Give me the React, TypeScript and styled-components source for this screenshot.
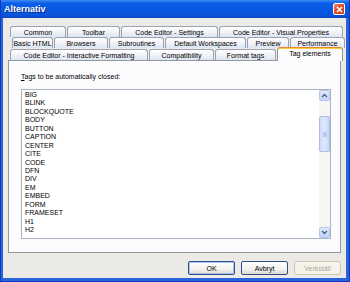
import React from 'react';
import styled, { createGlobalStyle, css } from 'styled-components';

const GlobalStyle = createGlobalStyle`
    html, body {
        margin: 0;
        padding: 0;
        background: #ffffff;
    }
    * {
        box-sizing: border-box;
    }
`;

const StyledWindow = styled.div`
    width: 350px;
    height: 282px;
    display: flex;
    flex-direction: column;
    background: #2a62dc;
    border-left: 1px solid #0a3bc0;
    border-right: 1px solid #0a3bc0;
    border-bottom: 1px solid #0a3bc0;
    font-family: 'Liberation Sans', Arial, sans-serif;
    overflow: hidden;
`;

const StyledTitleBar = styled.div`
    height: 18px;
    flex: none;
    display: flex;
    align-items: center;
    justify-content: space-between;
    padding: 0 4px 0 3px;
    background: linear-gradient(#3f8cf3 0%, #0b5ee6 18%, #0657e3 50%, #0a55dc 82%, #0b46c4 100%);
`;

const StyledTitle = styled.span`
    color: #ffffff;
    font-size: 9px;
    font-weight: 700;
    text-shadow: 1px 1px 0 #0a2a8a;
`;

const StyledCloseButton = styled.div`
    width: 12px;
    height: 12px;
    display: flex;
    align-items: center;
    justify-content: center;
    border: 1px solid #ffffff;
    border-radius: 2px;
    background: linear-gradient(135deg, #f08a6a 0%, #e0502a 45%, #c83a1a 100%);
`;

const StyledClient = styled.div`
    flex: 1;
    margin: 0 3px 3px 2px;
    display: flex;
    flex-direction: column;
    padding: 8px 5px 0 5px;
    background: #eceae6;
`;

const StyledTabStrip = styled.div`
    display: flex;
    flex-direction: column;
    padding-right: 1px;
`;

const StyledTabRow = styled.div<{ $indent: number; $last?: boolean }>`
    display: flex;
    align-items: flex-end;
    height: ${p => (p.$last ? 13 : 11)}px;
    padding-left: ${p => p.$indent}px;
    ${p =>
        p.$last &&
        css`
            margin-top: -1px;
        `}
`;

const StyledTab = styled.div<{ $width: number; $active?: boolean }>`
    width: ${p => p.$width}px;
    height: 11px;
    flex: none;
    display: flex;
    align-items: center;
    justify-content: center;
    border: 1px solid #98a4b4;
    border-bottom: none;
    border-radius: 3px 3px 0 0;
    margin-right: 1px;
    background: linear-gradient(#ffffff 0%, #f3f4f8 45%, #dde5f2 100%);
    font-size: 7px;
    color: #000000;
    white-space: nowrap;
    ${p =>
        p.$active &&
        css`
            height: 14px;
            margin-bottom: -1px;
            margin-right: 0;
            position: relative;
            z-index: 1;
            align-items: flex-start;
            padding-top: 2px;
            border-color: #919b9c;
            border-top: 1px solid #e68b2c;
            box-shadow: inset 0 1px 0 #ffc83c;
            background: #fcfcfe;
        `}
`;

const StyledPanel = styled.div`
    height: 193px;
    flex: none;
    display: flex;
    flex-direction: column;
    border: 1px solid #919b9c;
    background: #fcfcfe;
    padding: 11px 9px 0 12px;
`;

const StyledLabel = styled.div`
    font-size: 7px;
    line-height: 9px;
    color: #000000;
    margin-bottom: 8px;

    u {
        text-decoration: underline;
    }
`;

const StyledListBox = styled.div`
    height: 150px;
    display: flex;
    border: 1px solid #a9b3bf;
    background: #ffffff;
`;

const StyledItems = styled.ul`
    flex: 1;
    list-style: none;
    margin: 0;
    padding: 1px 0 0 3px;
    overflow: hidden;
`;

const StyledItem = styled.li`
    font-size: 7px;
    line-height: 8.45px;
    height: 8.45px;
    color: #000000;
    white-space: nowrap;
`;

const StyledScrollBar = styled.div`
    width: 11px;
    display: flex;
    flex-direction: column;
    background: #f7f6f3;
`;

const StyledScrollButton = styled.div`
    width: 11px;
    height: 11px;
    display: flex;
    align-items: center;
    justify-content: center;
    border: 1px solid #b7c8ef;
    border-radius: 2px;
    background: linear-gradient(#dfe8fc, #c3d4f8);
`;

const StyledThumb = styled.div`
    width: 11px;
    height: 36px;
    margin-top: 15px;
    display: flex;
    align-items: center;
    justify-content: center;
    border: 1px solid #a9bde8;
    border-radius: 2px;
    background: linear-gradient(90deg, #cddbfa, #dfe8fd 50%, #c7d6f9);

    span {
        width: 4px;
        height: 5px;
        background: #b8c9ee;
    }
`;

const StyledSpacer = styled.div`
    flex: 1;
`;

const StyledButtonRow = styled.div`
    display: flex;
    justify-content: flex-end;
    gap: 6px;
    margin-top: 8px;
`;

const StyledButton = styled.button<{ $default?: boolean }>`
    width: 47px;
    height: 14px;
    padding: 0;
    font-family: 'Liberation Sans', Arial, sans-serif;
    font-size: 7px;
    color: #000000;
    border: 1px solid #2f4f86;
    border-radius: 2px;
    background: linear-gradient(#ffffff 0%, #f3f2ee 60%, #dcdad2 100%);
    ${p =>
        p.$default &&
        css`
            box-shadow: inset 0 0 0 1px #a8c3f0;
        `}

    &:disabled {
        color: #aca899;
        border-color: #c9c7ba;
        background: #f5f4ea;
    }
`;

type TabDef = [string, number, boolean?];

const tabRows: { indent: number; tabs: TabDef[] }[] = [
    {
        indent: 2,
        tabs: [
            ['Common', 56],
            ['Toolbar', 53],
            ['Code Editor - Settings', 97],
            ['Code Editor - Visual Properties', 124],
        ],
    },
    {
        indent: 4,
        tabs: [
            ['Basic HTML', 41],
            ['Browsers', 54],
            ['Subroutines', 55],
            ['Default Workspaces', 81],
            ['Preview', 42],
            ['Performance', 55],
        ],
    },
    {
        indent: 2,
        tabs: [
            ['Code Editor - Interactive Formatting', 138],
            ['Compatibility', 65],
            ['Format tags', 61],
            ['Tag elements', 66, true],
        ],
    },
];

const tags = [
    'BIG', 'BLINK', 'BLOCKQUOTE', 'BODY', 'BUTTON', 'CAPTION', 'CENTER', 'CITE', 'CODE',
    'DFN', 'DIV', 'EM', 'EMBED', 'FORM', 'FRAMESET', 'H1', 'H2',
];

const Arrow: React.FC<{ down?: boolean }> = ({ down }) => (
    <svg width="7" height="5" viewBox="0 0 7 5">
        <polyline
            points={down ? '1,1 3.5,3.5 6,1' : '1,4 3.5,1.5 6,4'}
            fill="none"
            stroke="#4d6185"
            strokeWidth="1.4"
        />
    </svg>
);

const App: React.FC = () => (
    <>
        <GlobalStyle />
        <StyledWindow>
            <StyledTitleBar>
                <StyledTitle>Alternativ</StyledTitle>
                <StyledCloseButton>
                    <svg width="7" height="7" viewBox="0 0 7 7">
                        <path d="M1 1L6 6M6 1L1 6" stroke="#ffffff" strokeWidth="1.5" />
                    </svg>
                </StyledCloseButton>
            </StyledTitleBar>
            <StyledClient>
                <StyledTabStrip>
                    {tabRows.map((row, i) => (
                        <StyledTabRow key={i} $indent={row.indent} $last={i === tabRows.length - 1}>
                            {row.tabs.map(([label, width, active]) => (
                                <StyledTab key={label} $width={width} $active={active}>
                                    {label}
                                </StyledTab>
                            ))}
                        </StyledTabRow>
                    ))}
                </StyledTabStrip>
                <StyledPanel>
                    <StyledLabel>
                        <u>T</u>ags to be automatically closed:
                    </StyledLabel>
                    <StyledListBox>
                        <StyledItems>
                            {tags.map(tag => (
                                <StyledItem key={tag}>{tag}</StyledItem>
                            ))}
                        </StyledItems>
                        <StyledScrollBar>
                            <StyledScrollButton>
                                <Arrow />
                            </StyledScrollButton>
                            <StyledThumb>
                                <span />
                            </StyledThumb>
                            <StyledSpacer />
                            <StyledScrollButton>
                                <Arrow down />
                            </StyledScrollButton>
                        </StyledScrollBar>
                    </StyledListBox>
                </StyledPanel>
                <StyledButtonRow>
                    <StyledButton $default>OK</StyledButton>
                    <StyledButton>Avbryt</StyledButton>
                    <StyledButton disabled>Verkställ</StyledButton>
                </StyledButtonRow>
            </StyledClient>
        </StyledWindow>
    </>
);

export default App;
